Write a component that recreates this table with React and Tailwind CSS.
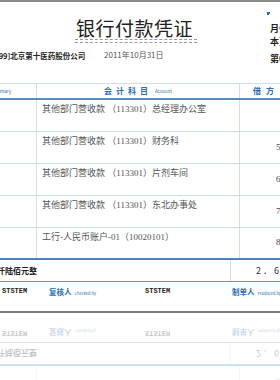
const serif = { fontFamily: '"Liberation Serif", "Noto Sans CJK SC", serif' };

const rows = [
  { subject: '其他部门营收款 （113301）总经理办公室', amount: '' },
  { subject: '其他部门营收款 （113301）财务科', amount: '5,200.00' },
  { subject: '其他部门营收款 （113301）片剂车间', amount: '6,400.00' },
  { subject: '其他部门营收款 （113301）东北办事处', amount: '7,000.00' },
];

function Row({ subject, amount, last }) {
  return (
    <div
      className={`flex h-[32px] ${last ? 'border-b-2 border-[#4f82b8]' : 'border-b border-[#cfdeec]'}`}
    >
      <div className="w-[77px] border-r border-[#cfdeec]" />
      <div className="w-[203px] border-r border-[#cfdeec] pl-[5px] pt-[3px] text-[9px] leading-[12px] text-[#555]" style={serif}>
        {subject}
      </div>
      <div className="flex-1 flex items-center pl-[36px] text-[9px] text-[#4a4a4a] whitespace-nowrap" style={serif}>
        {amount}
      </div>
    </div>
  );
}

function Tail() {
  return (
    <div>
      <Row subject="工行-人民币账户-01（10020101）" amount="8,000.00" last />
      <div className="flex h-[22px] border-b border-[#5f97cf]">
        <div className="w-[280px] border-r border-[#cfdeec] flex items-center pl-[13px] text-[8px] font-bold text-[#222] whitespace-nowrap">
          贰万陆仟陆佰元整
        </div>
        <div className="flex-1 flex items-center pl-[25px] text-[9px] text-[#333] tracking-[2px] whitespace-nowrap">
          2．600．00
        </div>
      </div>
      <div className="flex h-[29px] pt-[5px] text-[7px] leading-[9px] whitespace-nowrap">
        <span className="w-[89px] shrink-0 pl-[42px] font-bold text-[#222]" style={{ fontFamily: '"Liberation Mono", monospace' }}>
          STSTEM
        </span>
        <span className="w-[96px] shrink-0 flex items-baseline gap-[3px] text-[#2d6db3] font-bold">
          <span className="text-[7.5px]">复核人</span>
          <span className="text-[4px] font-normal">Checked by</span>
        </span>
        <span className="w-[87px] shrink-0 font-bold text-[#222]" style={{ fontFamily: '"Liberation Mono", monospace' }}>
          STSTEM
        </span>
        <span className="flex items-baseline gap-[3px] text-[#2d6db3] font-bold">
          <span className="text-[7.5px]">制单人</span>
          <span className="text-[4px] font-normal">Produced by</span>
        </span>
      </div>
    </div>
  );
}

export default function App() {
  return (
    <div
      className="w-[280px] h-[380px] overflow-hidden bg-white"
      style={{ fontFamily: '"Noto Sans CJK SC", "Noto Sans", sans-serif' }}
    >
      <div className="w-[360px] -ml-[40px]">
        <div className="h-[2px] bg-[#8a8a8a]" />

        <div className="flex h-[81px]">
          <div className="w-[300px] shrink-0">
            <div className="pt-[15px] pl-[116px] text-[19px] leading-[21px] text-[#222] tracking-[0.5px]">
              银行付款凭证
            </div>
            <div className="ml-[115px] w-[122px] h-[4px] mt-[1px] border-y border-dashed border-[#9a9a9a]" />
            <div className="flex items-end mt-[6px]">
              <span className="w-[144px] shrink-0 pl-[27px] text-[7.5px] font-bold text-[#222] whitespace-nowrap">
                [0099]北京第十医药股份公司
              </span>
              <span className="text-[8px] text-[#555] whitespace-nowrap">2011年10月31日</span>
            </div>
          </div>
          <div className="pl-[7px] pt-[10px] whitespace-nowrap">
            <div className="w-[3px] h-[3px] border-l-2 border-t-2 border-[#2d6db3]" />
            <div className="pl-[3px] pt-[9px] flex flex-col gap-[3px] text-[9px] leading-[10px] font-bold text-[#222]">
              <span>月份</span>
              <span>本页</span>
              <span className="pt-[4px]">第0</span>
            </div>
          </div>
        </div>

        <div className="flex h-[17px] border-t border-[#cfdeec] border-b-2 border-b-[#5a8cc2] text-[#2d6db3] whitespace-nowrap">
          <div className="w-[77px] border-r border-[#cfdeec] flex items-center justify-end pr-[25px] gap-[3px]">
            <span className="text-[8px] font-bold tracking-[3px]">摘要</span>
            <span className="text-[4.5px]">Summary</span>
          </div>
          <div className="w-[203px] border-r border-[#cfdeec] flex items-center justify-center gap-[3px]">
            <span className="text-[8px] font-bold tracking-[4px]">会计科目</span>
            <span className="text-[4.5px]">Account</span>
          </div>
          <div className="flex-1 flex items-center pl-[13px] gap-[3px]">
            <span className="text-[8px] font-bold tracking-[5px]">借方</span>
            <span className="text-[4.5px]">Debit</span>
          </div>
        </div>

        {rows.map((r) => (
          <Row key={r.subject} {...r} />
        ))}
        <Tail />

        <div className="h-[2px] bg-[#7a7a7a]" />

        <div className="-scale-y-100 opacity-25">
          <Tail />
        </div>
      </div>
    </div>
  );
}
